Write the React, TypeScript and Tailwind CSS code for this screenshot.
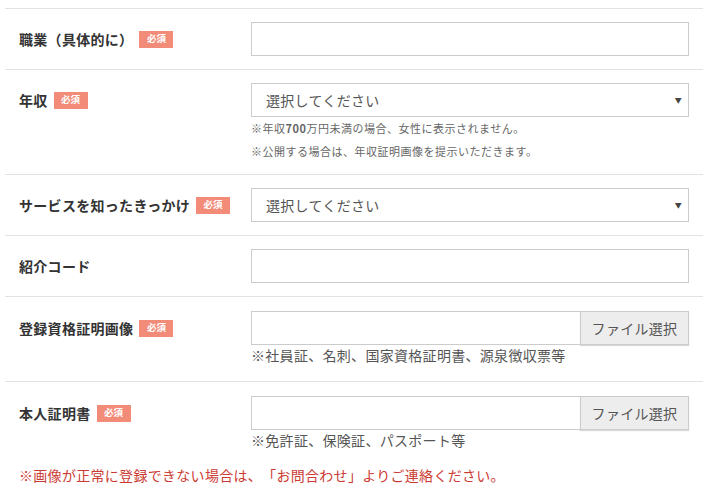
import React from "react";

const font = { fontFamily: '"Noto Sans CJK JP", "Noto Sans", sans-serif' };

function Badge() {
  return (
    <span className="ml-[6px] inline-flex h-[17px] w-[34px] items-center justify-center bg-[#f28b78] text-[9.5px] font-bold leading-none tracking-normal text-white">
      必須
    </span>
  );
}

function Label({ text, req }: { text: string; req?: boolean }) {
  return (
    <div className="flex h-[34px] w-[246px] shrink-0 items-center pl-[14px] text-[14px] font-bold text-[#333]">
      <span>{text}</span>
      {req && <Badge />}
    </div>
  );
}

function TextInput() {
  return <div className="h-[34px] w-[438px] border border-[#cccccc] bg-white" />;
}

function Select() {
  return (
    <div className="flex h-[34px] w-[438px] items-center justify-between border border-[#cccccc] bg-white pl-[14px] pr-[6px]">
      <span className="text-[14px] text-[#555]">選択してください</span>
      <span className="text-[7px] text-[#444]">▼</span>
    </div>
  );
}

function FileInput() {
  return (
    <div className="flex h-[34px] w-[438px]">
      <div className="h-full flex-1 border border-r-0 border-[#cccccc] bg-white" />
      <div className="flex h-full w-[109px] items-center justify-center border border-[#cccccc] bg-[#ededed] text-[14px] text-[#555] shadow-[0_1px_1px_rgba(0,0,0,0.15)]">
        ファイル選択
      </div>
    </div>
  );
}

export default function App() {
  return (
    <div className="h-[489px] w-[708px] overflow-hidden bg-white pt-[8px] tracking-[0.3px] [text-spacing-trim:space-all]" style={font}>
      <div className="mx-[5px] border-t border-[#e2e2e2]">
        <div className="flex border-b border-[#e2e2e2] pt-[13px] pb-[13px]">
          <Label text="職業（具体的に）" req />
          <TextInput />
        </div>
        <div className="flex border-b border-[#e2e2e2] pt-[13px] pb-[11px]">
          <Label text="年収" req />
          <div>
            <Select />
            <div className="text-[11px] leading-[23px] tracking-[0.5px] text-[#666]">
              <p>※年収<span className="font-bold">700</span>万円未満の場合、女性に表示されません。</p>
              <p>※公開する場合は、年収証明画像を提示いただきます。</p>
            </div>
          </div>
        </div>
        <div className="flex border-b border-[#e2e2e2] pt-[13px] pb-[13px]">
          <Label text="サービスを知ったきっかけ" req />
          <Select />
        </div>
        <div className="flex border-b border-[#e2e2e2] pt-[13px] pb-[13px]">
          <Label text="紹介コード" />
          <TextInput />
        </div>
        <div className="flex border-b border-[#e2e2e2] pt-[14px] pb-[15px]">
          <Label text="登録資格証明画像" req />
          <div>
            <FileInput />
            <p className="text-[14px] leading-[21px] text-[#555]">※社員証、名刺、国家資格証明書、源泉徴収票等</p>
          </div>
        </div>
        <div className="flex pt-[14px]">
          <Label text="本人証明書" req />
          <div>
            <FileInput />
            <p className="text-[14px] leading-[21px] text-[#555]">※免許証、保険証、パスポート等</p>
          </div>
        </div>
        <p className="mt-[14px] pl-[14px] text-[14px] leading-[21px] text-[#cc3b33]">
          ※画像が正常に登録できない場合は、「お問合わせ」よりご連絡ください。
        </p>
      </div>
    </div>
  );
}
